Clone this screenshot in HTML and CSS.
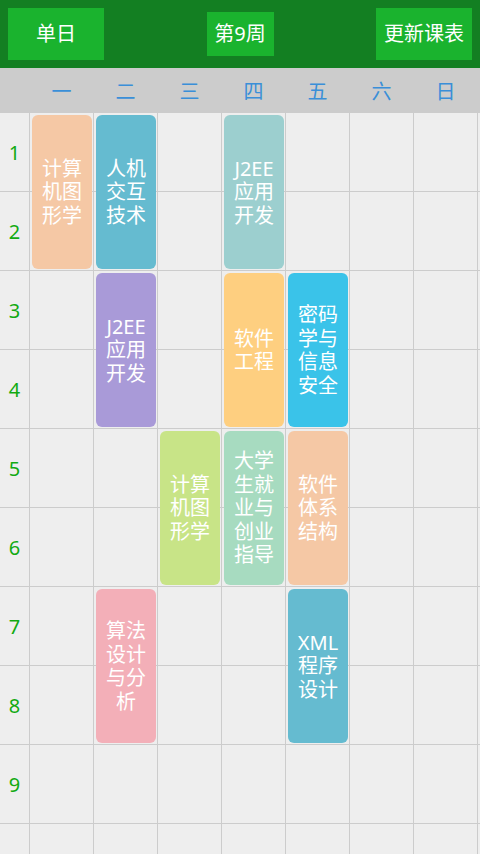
FILE: index.html
```html
<!DOCTYPE html>
<html lang="zh-CN">
<head>
<meta charset="utf-8">
<title>课表</title>
<link rel="stylesheet" href="styles.css">
</head>
<body>
<div class="app">
  <header class="topbar">
    <button class="btn btn-big">单日</button>
    <button class="btn btn-week">第9周</button>
    <button class="btn btn-big">更新课表</button>
  </header>

  <div class="days">
    <div class="corner"></div>
    <div class="day">一</div>
    <div class="day">二</div>
    <div class="day">三</div>
    <div class="day">四</div>
    <div class="day">五</div>
    <div class="day">六</div>
    <div class="day">日</div>
  </div>

  <div class="table">
    <div class="num r1">1</div>
    <div class="num r2">2</div>
    <div class="num r3">3</div>
    <div class="num r4">4</div>
    <div class="num r5">5</div>
    <div class="num r6">6</div>
    <div class="num r7">7</div>
    <div class="num r8">8</div>
    <div class="num r9">9</div>

    <div class="course c-peach d1 s1">计算机图形学</div>
    <div class="course c-teal d2 s1">人机交互技术</div>
    <div class="course c-aqua d4 s1">J2EE应用开发</div>

    <div class="course c-purple d2 s3">J2EE应用开发</div>
    <div class="course c-orange d4 s3">软件工程</div>
    <div class="course c-sky d5 s3">密码学与信息安全</div>

    <div class="course c-lime d3 s5">计算机图形学</div>
    <div class="course c-mint d4 s5">大学生就业与创业指导</div>
    <div class="course c-peach d5 s5">软件体系结构</div>

    <div class="course c-pink d2 s7">算法设计与分析</div>
    <div class="course c-teal d5 s7">XML程序设计</div>
  </div>
</div>
</body>
</html>
```

FILE: styles.css
```css
* { box-sizing: border-box; }

html, body {
  margin: 0;
  padding: 0;
  overflow: hidden;
}

body {
  font-family: "Noto Sans", "Noto Sans CJK SC", sans-serif;
  background: #eeeeee;
}

.app {
  height: 100vh;
  overflow: hidden;
  display: flex;
  flex-direction: column;
}

/* ---------- top bar ---------- */
.topbar {
  flex: 0 0 68px;
  height: 68px;
  background: #137f22;
  padding: 8px;
  display: flex;
  align-items: center;
  justify-content: space-between;
}

.btn {
  border: 0;
  margin: 0;
  padding: 0;
  background: #1ab32e;
  color: #ffffff;
  font-family: "Noto Sans", "Noto Sans CJK SC", sans-serif;
  font-size: 20px;
  line-height: 1;
  display: flex;
  align-items: center;
  justify-content: center;
}

.btn-big {
  width: 96px;
  height: 52px;
}

.btn-week {
  width: 67px;
  height: 44px;
}

/* ---------- weekday header ---------- */
.days {
  flex: 0 0 45px;
  height: 45px;
  background: #cccccc;
  display: grid;
  grid-template-columns: 29px repeat(7, 63px) 1fr;
  column-gap: 1px;
  align-items: center;
}

.day {
  text-align: center;
  color: #3a8fd8;
  font-size: 20px;
  line-height: 1;
  padding-top: 2px;
}

/* ---------- timetable grid ---------- */
.table {
  flex: 0 0 auto;
  display: grid;
  grid-template-columns: 29px repeat(7, 63px) 1fr;
  grid-template-rows: repeat(10, 78px);
  gap: 1px;
  background-color: #eeeeee;
  background-image:
    linear-gradient(to right, #cccccc 1px, transparent 1px),
    linear-gradient(to bottom, #cccccc 1px, transparent 1px);
  background-size: 64px 79px, 64px 79px;
  background-position: 29px 78px, 29px 78px;
}

.num {
  grid-column: 1;
  display: flex;
  align-items: center;
  justify-content: center;
  color: #12aa12;
  font-size: 20px;
  line-height: 1;
  padding-top: 2px;
}

.r1 { grid-row: 1; }
.r2 { grid-row: 2; }
.r3 { grid-row: 3; }
.r4 { grid-row: 4; }
.r5 { grid-row: 5; }
.r6 { grid-row: 6; }
.r7 { grid-row: 7; }
.r8 { grid-row: 8; }
.r9 { grid-row: 9; }

.course {
  margin: 2px 1px 1px 2px;
  border-radius: 6px;
  padding: 0 4px;
  display: flex;
  align-items: center;
  justify-content: center;
  text-align: center;
  color: #ffffff;
  font-family: "Noto Sans", "Noto Sans CJK SC", sans-serif;
  font-size: 20px;
  line-height: 23.5px;
  word-break: normal;
}

.d1 { grid-column: 2; }
.d2 { grid-column: 3; }
.d3 { grid-column: 4; }
.d4 { grid-column: 5; }
.d5 { grid-column: 6; }
.d6 { grid-column: 7; }
.d7 { grid-column: 8; }

.s1 { grid-row: 1 / span 2; }
.s3 { grid-row: 3 / span 2; }
.s5 { grid-row: 5 / span 2; }
.s7 { grid-row: 7 / span 2; }

.c-peach  { background: #f5c8a5; }
.c-teal   { background: #65bbd0; }
.c-aqua   { background: #9ccfcf; }
.c-purple { background: #a99ad8; }
.c-orange { background: #fecf80; }
.c-sky    { background: #3ac3e9; }
.c-lime   { background: #c8e487; }
.c-mint   { background: #a7dbc0; }
.c-pink   { background: #f3afb8; }
```
